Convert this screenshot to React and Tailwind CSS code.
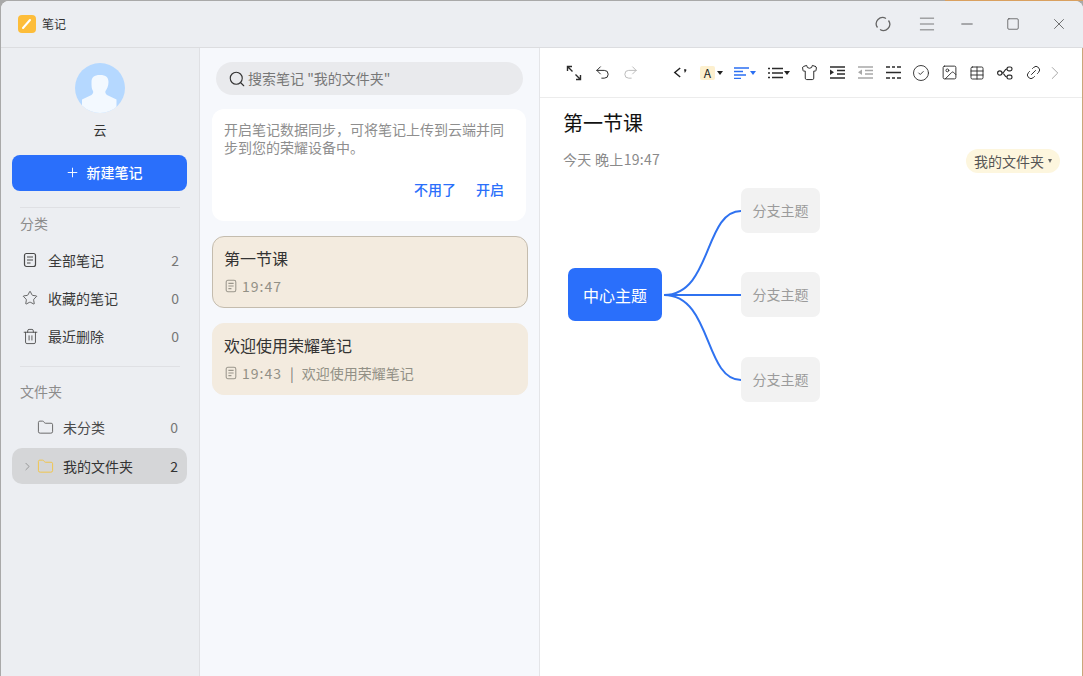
import React from 'react'
import { Plus, Search, Star, Trash2, Folder, ChevronRight, Undo2, Redo2, Shirt, CircleCheck, Image, Table, Link2, Menu, Minus, Square, X } from 'lucide-react'

const FONT = { fontFamily: '"Noto Sans CJK SC", "Noto Sans", sans-serif' }

function DocIcon({ className = 'w-4 h-4', color = '#444' }) {
  return (
    <svg viewBox="0 0 16 16" className={className} fill="none" stroke={color} strokeWidth="1.2">
      <rect x="2.5" y="1.5" width="11" height="13" rx="2" />
      <path d="M5 5h6M5 8h6M5 11h3.5" />
    </svg>
  )
}

function Caret() {
  return <span className="w-0 h-0 border-l-[3px] border-r-[3px] border-t-[4px] border-l-transparent border-r-transparent border-t-[#222]" />
}

function SideRow({ icon, label, count }) {
  return (
    <div className="flex items-center h-[38px] pl-[10px] pr-[8px] text-[14px] text-[#3a3a3a]">
      <span className="w-[26px] flex items-center">{icon}</span>
      <span className="flex-1">{label}</span>
      <span className="text-[#777]">{count}</span>
    </div>
  )
}

function NoteCard({ title, time, preview, selected }) {
  return (
    <div className={`h-[72px] rounded-[12px] bg-[#f3ebdf] px-[11px] pt-[7px] border ${selected ? 'border-[#c4bcae]' : 'border-[#f3ebdf]'}`}>
      <div className="text-[16px] leading-[28px] text-[#333]">{title}</div>
      <div className="flex items-center mt-[2px] text-[14px] leading-[24px] text-[#929086]">
        <DocIcon className="w-[14px] h-[14px] mr-[4px]" color="#9a968c" />
        <span className="tracking-[1px]">{time}</span>
        {preview && <span className="mx-[8px] text-[#777]">|</span>}
        {preview && <span>{preview}</span>}
      </div>
    </div>
  )
}

function Branch({ className }) {
  return (
    <div className={`absolute left-[201px] w-[79px] h-[45px] rounded-[7px] bg-[#f2f2f2] flex items-center justify-center text-[14px] text-[#9b9b9b] ${className}`}>
      分支主题
    </div>
  )
}

function ToolBtn({ children, w = 'w-[28px]' }) {
  return <span className={`${w} h-[20px] flex items-center justify-center text-[#2b2b2b]`}>{children}</span>
}

function Toolbar() {
  return (
    <div className="h-[50px] border-b border-[#ececec] flex items-center pl-[20px]">
      <ToolBtn>
        <svg viewBox="0 0 16 16" className="w-[16px] h-[16px]" fill="none" stroke="#2b2b2b" strokeWidth="1.4">
          <path d="M1.500 1.500l5 5M9.500 9.500l5 5M1.500 6V1.500H6M14.500 10V14.500H10" />
        </svg>
      </ToolBtn>
      <ToolBtn><Undo2 size={17} strokeWidth={1.4} /></ToolBtn>
      <ToolBtn><Redo2 size={17} strokeWidth={1.4} color="#bbbbbb" /></ToolBtn>
      <span className="w-[22px]" />
      <ToolBtn>
        <span className="flex items-center gap-[2px]">
          <svg viewBox="0 0 10 14" className="w-[9px] h-[13px]" fill="none" stroke="#222" strokeWidth="1.6"><path d="M8 2L2 7l6 5" /></svg>
          <svg viewBox="0 0 4 6" className="w-[3px] h-[5px] mb-[3px]"><path d="M0 0h3v2L1 5z" fill="#222" /></svg>
        </span>
      </ToolBtn>
      <span className="w-[6px]" />
      <span className="w-[30px] h-[20px] flex items-center gap-[2px]">
        <span className="w-[15px] h-[14px] rounded-[2px] bg-[#fdf0cf] text-[12px] leading-[14px] text-center text-[#222]">A</span>
        <Caret />
      </span>
      <span className="w-[4px]" />
      <span className="w-[22px] h-[20px] flex items-center gap-[1px]">
        <svg viewBox="0 0 15 12" className="w-[15px] h-[12px]" fill="none" stroke="#2b6ff2" strokeWidth="1.3"><path d="M0 1h15M0 4.500h9M0 8h12M0 11.500h7" /></svg>
        <span className="w-0 h-0 border-l-[3px] border-r-[3px] border-t-[4px] border-l-transparent border-r-transparent border-t-[#2b6ff2]" />
      </span>
      <span className="w-[12px]" />
      <span className="w-[24px] h-[20px] flex items-center gap-[1px]">
        <svg viewBox="0 0 15 12" className="w-[15px] h-[12px]" fill="none" stroke="#2b2b2b" strokeWidth="1.3"><path d="M0 1.500h2M4 1.500h11M0 6h2M4 6h11M0 10.500h2M4 10.500h11" /></svg>
        <Caret />
      </span>
      <span className="w-[3px]" />
      <ToolBtn><Shirt size={17} strokeWidth={1.4} /></ToolBtn>
      <ToolBtn>
        <svg viewBox="0 0 15 13" className="w-[15px] h-[13px]" fill="none" stroke="#2b2b2b" strokeWidth="1.3"><path d="M0 1h15M7 4.500h8M7 8h8M0 12h15" /><path d="M0 3.500l4 2.700-4 2.700z" fill="#2b2b2b" stroke="none" /></svg>
      </ToolBtn>
      <ToolBtn>
        <svg viewBox="0 0 15 13" className="w-[15px] h-[13px]" fill="none" stroke="#a8a8a8" strokeWidth="1.3"><path d="M0 1h15M7 4.500h8M7 8h8M0 12h15" /><path d="M4 3.500L0 6.200l4 2.700z" fill="#a8a8a8" stroke="none" /></svg>
      </ToolBtn>
      <ToolBtn>
        <svg viewBox="0 0 15 13" className="w-[15px] h-[13px]" fill="none" stroke="#2b2b2b" strokeWidth="1.3"><path d="M0 1h4M6 1h3M11 1h4M0 6.500h15M0 12h4M6 12h3M11 12h4" /></svg>
      </ToolBtn>
      <ToolBtn><CircleCheck size={18} strokeWidth={1.2} /></ToolBtn>
      <ToolBtn><Image size={17} strokeWidth={1.3} /></ToolBtn>
      <ToolBtn><Table size={16} strokeWidth={1.4} /></ToolBtn>
      <ToolBtn>
        <svg viewBox="0 0 16 14" className="w-[16px] h-[14px]" fill="none" stroke="#2b2b2b" strokeWidth="1.2">
          <circle cx="2.800" cy="7" r="2.200" /><rect x="10" y="1" width="5" height="3.800" rx="1.800" /><rect x="10" y="9.200" width="5" height="3.800" rx="1.800" />
          <path d="M5 7c3 0 2-4 5-4M5 7c3 0 2 4 5 4" />
        </svg>
      </ToolBtn>
      <ToolBtn><Link2 size={17} strokeWidth={1.3} className="-rotate-45" /></ToolBtn>
      <span className="w-[16px] flex justify-center"><ChevronRight size={22} strokeWidth={1} color="#a0a0a0" className="shrink-0" /></span>
    </div>
  )
}

export default function App() {
  return (
    <div style={FONT} className="w-[1083px] h-[676px] bg-[#a9a9a9] overflow-hidden">
      <div className="h-[1px] ml-[945px] bg-[#d9a060]" />
      <div className="h-full ml-[1px] rounded-tl-[8px] rounded-tr-[8px] overflow-hidden flex flex-col bg-white">
        <div className="h-[47px] shrink-0 bg-[#eceef2] border-b border-[#dcdde0] flex items-center pl-[17px]">
          <svg viewBox="0 0 18 18" className="w-[18px] h-[18px]">
            <rect width="18" height="18" rx="4" fill="#fdbd3a" />
            <path d="M5 13l7-8" stroke="#fff" strokeWidth="2" strokeLinecap="round" />
          </svg>
          <span className="ml-[6px] text-[12px] text-[#333]">笔记</span>
          <div className="flex-1" />
          <svg viewBox="0 0 16 16" className="w-[16px] h-[16px] mr-[26px]" fill="none" stroke="#666" strokeWidth="1.300">
            <path d="M2.500 11.500A6.300 6.300 0 0 1 11 2.500M13.500 4.500A6.300 6.300 0 0 1 5 13.500" />
          </svg>
          <Menu size={20} strokeWidth={0.9} color="#555" className="mr-[21px]" />
          <Minus size={18} strokeWidth={1} color="#333" className="mr-[30px]" />
          <Square size={14} strokeWidth={1.1} color="#333" className="mr-[30px]" />
          <X size={18} strokeWidth={0.9} color="#333" className="mr-[15px]" />
        </div>

        <div className="flex-1 flex min-h-0">
          <aside className="w-[199px] shrink-0 bg-[#eceef2] border-r border-[#dfe0e4] pl-[11px] pr-[11px]">
            <div className="flex justify-center pt-[15px]">
              <svg viewBox="0 0 50 50" className="w-[50px] h-[50px]">
                <defs><clipPath id="av"><circle cx="25" cy="25" r="25" /></clipPath></defs>
                <circle cx="25" cy="25" r="25" fill="#b5d8ff" />
                <g clipPath="url(#av)" fill="#f3f9ff">
                  <path d="M16.500 19c0-4.500 2.500-7 8.500-7s8.500 2.500 8.500 7c0 4-1.500 7-3 9-.5 1.500 0 3 1.500 4l9.500 4.500V52H7V36.500l9.500-4.500c1.500-1 2-2.500 1.500-4-1.500-2-1.500-5-1.500-9z" />
                </g>
              </svg>
            </div>
            <div className="text-center text-[13px] leading-[20px] mt-[7px] text-[#333]">云</div>
            <div className="mt-[15px] mr-[1px] h-[36px] pl-[8px] pb-[1px] rounded-[8px] bg-[#2a6ffb] flex items-center justify-center gap-[7px] text-white text-[14px] font-medium">
              <Plus size={15} strokeWidth={1.5} />
              新建笔记
            </div>
            <div className="mx-[8px] mt-[16px] border-t border-[#dfe0e4]" />
            <div className="pl-[8px] mt-[5px] text-[14px] leading-[20px] text-[#8c8c8c]">分类</div>
            <div className="mt-[8px] mr-[1px]">
              <SideRow icon={<DocIcon className="w-[16px] h-[16px]" color="#4a4a4a" />} label="全部笔记" count="2" />
              <SideRow icon={<Star size={16} strokeWidth={1.2} color="#444" />} label="收藏的笔记" count="0" />
              <SideRow icon={<Trash2 size={17} strokeWidth={1.2} color="#444" />} label="最近删除" count="0" />
            </div>
            <div className="mx-[8px] mt-[11px] border-t border-[#dfe0e4]" />
            <div className="pl-[8px] mt-[14px] text-[14px] leading-[20px] text-[#8c8c8c]">文件夹</div>
            <div className="mt-[8px] mr-[1px] flex items-center h-[37px] pl-[25px] pr-[9px] text-[14px] text-[#4a4a4a]">
              <Folder size={17} strokeWidth={1.2} color="#555" className="mr-[9px]" />
              <span className="flex-1">未分类</span>
              <span className="text-[#777]">0</span>
            </div>
            <div className="mt-[2px] mr-[1px] flex items-center h-[36px] rounded-[10px] bg-[#d5d6d8] pl-[9px] pr-[9px] text-[14px] text-[#333]">
              <ChevronRight size={13} strokeWidth={1.2} color="#777" className="mr-[3px]" />
              <Folder size={17} strokeWidth={1.3} color="#f2c444" className="mr-[9px]" />
              <span className="flex-1">我的文件夹</span>
              <span>2</span>
            </div>
          </aside>

          <section className="w-[340px] shrink-0 bg-[#f6f8fc] border-r border-[#e4e5e8] pl-[12px] pr-[11px]">
            <div className="ml-[4px] mr-[5px] mt-[14px] h-[33px] rounded-full bg-[#e9eaed] flex items-center pl-[12px] text-[14px] text-[#777]">
              <Search size={18} strokeWidth={1.5} color="#333" />
              <span className="ml-[2px]">搜索笔记 "我的文件夹"</span>
            </div>
            <div className="mt-[14px] mr-[2px] h-[112px] rounded-[12px] bg-white px-[12px] pt-[11px]">
              <p className="w-[284px] text-[14px] leading-[18px] text-[#8e8e8e]">开启笔记数据同步，可将笔记上传到云端并同步到您的荣耀设备中。</p>
              <div className="mt-[23px] flex justify-end gap-[20px] pr-[10px] text-[14px] font-medium text-[#2a6ffb]">
                <span>不用了</span>
                <span>开启</span>
              </div>
            </div>
            <div className="mt-[15px] flex flex-col gap-[15px]">
              <NoteCard selected title="第一节课" time="19:47" />
              <NoteCard title="欢迎使用荣耀笔记" time="19:43" preview="欢迎使用荣耀笔记" />
            </div>
          </section>

          <main className="flex-1 bg-white border-r border-[#c9a77a] min-w-0">
            <Toolbar />
            <div className="pl-[23px] pr-[22px]">
              <div className="pt-[10px] text-[20px] leading-[30px] text-[#111]">第一节课</div>
              <div className="flex items-start justify-between mt-[11px]">
                <span className="text-[14px] leading-[20px] tracking-[0.3px] text-[#8a8a8a]">今天 晚上19:47</span>
                <span className="h-[24px] rounded-full bg-[#fdf6de] pl-[8px] pr-[8px] flex items-center gap-[4px] text-[14px] text-[#555]">
                  我的文件夹
                  <span className="w-0 h-0 border-l-[2.500px] border-r-[2.500px] border-t-[4px] border-l-transparent border-r-transparent border-t-[#666]" />
                </span>
              </div>
            </div>
            <div className="relative h-[240px]">
              <svg viewBox="0 0 300 240" className="absolute left-0 top-0 w-[300px] h-[240px]" fill="none" stroke="#2f72f0" strokeWidth="2">
                <path d="M124 122 C 172 122, 164 38, 201 38" />
                <path d="M124 122 H 201" />
                <path d="M124 122 C 172 122, 164 207, 201 207" />
              </svg>
              <div className="absolute left-[28px] top-[95px] w-[94px] h-[53px] rounded-[7px] bg-[#2a6ffb] flex items-center justify-center text-white text-[16px]">
                中心主题
              </div>
              <Branch className="top-[15px]" />
              <Branch className="top-[99px]" />
              <Branch className="top-[184px]" />
            </div>
          </main>
        </div>
      </div>
    </div>
  )
}
